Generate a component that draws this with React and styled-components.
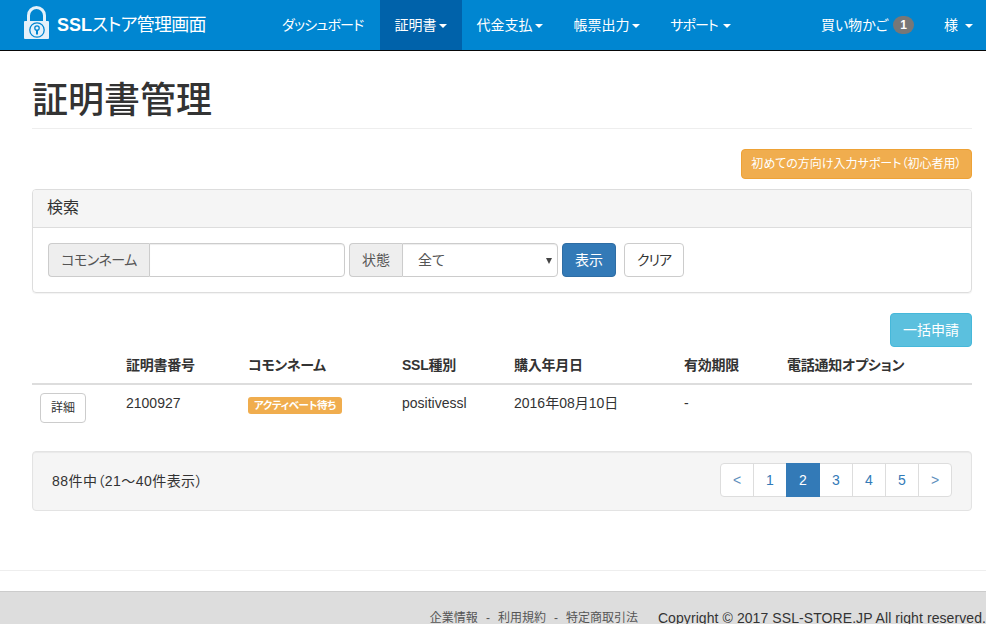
import styled, { createGlobalStyle } from 'styled-components';

const GlobalStyle = createGlobalStyle`
  html, body {
    margin: 0;
    padding: 0;
    background: #fff;
    overflow: hidden;
  }
  body {
    font-family: "Liberation Sans", "Noto Sans CJK JP", sans-serif;
    font-size: 14px;
    line-height: 20px;
    color: #333;
    font-feature-settings: "palt";
  }
  * { box-sizing: border-box; }
`

const Page = styled.div`
  width: 986px;
  height: 624px;
  overflow: hidden;
`
const Navbar = styled.nav`
  height: 51px;
  display: flex;
  align-items: stretch;
  background: #0086d1;
  border-bottom: 1px solid #080808;
  color: #fff;
`
const Brand = styled.div`
  width: 267px;
  padding: 6px 0 0 24px;
  display: flex;
  gap: 8px;
  font-size: 18px;
  line-height: 38px;
  letter-spacing: -0.7px;
  b { font-weight: 700; letter-spacing: 0; }
`
const NavItem = styled.div`
  padding: 15px ${(p) => p.$pr || 15}px 15px ${(p) => p.$pl || 15}px;
  display: flex;
  align-items: center;
  letter-spacing: ${(p) => p.$tight || 0}px;
  background: ${(p) => (p.$active ? '#0062aa' : 'transparent')};
`
const Spacer = styled.div`
  flex: 1;
`
const Caret = styled.span`
  display: inline-block;
  margin-left: ${(p) => p.$gap || 3}px;
  margin-top: 2px;
  border-top: 4px solid #fff;
  border-left: 4px solid transparent;
  border-right: 4px solid transparent;
`
const CountBadge = styled.span`
  margin-left: 5px;
  width: 21px;
  height: 18px;
  border-radius: 10px;
  background: #777;
  color: #fff;
  font-size: 12px;
  font-weight: 700;
  line-height: 18px;
  text-align: center;
`
const Main = styled.main`
  padding: 0 14px 0 32px;
`
const Title = styled.h1`
  margin: 0;
  height: 78px;
  padding-top: 28px;
  font-size: 36px;
  font-weight: 500;
  line-height: 44px;
  color: #333;
  border-bottom: 1px solid #eee;
`
const ActionRow = styled.div`
  display: flex;
  justify-content: flex-end;
  margin-top: ${(p) => p.$top}px;
`
const Button = styled.button`
  font: inherit;
  font-feature-settings: "palt";
  height: ${(p) => p.$h || 34}px;
  padding: 0 ${(p) => p.$px || 12}px;
  border-radius: 4px;
  border: 1px solid ${(p) => ({ warning: '#eea236', info: '#46b8da', primary: '#2e6da4' }[p.$kind] || '#ccc')};
  background: ${(p) => ({ warning: '#f0ad4e', info: '#5bc0de', primary: '#337ab7' }[p.$kind] || '#fff')};
  color: ${(p) => (p.$kind ? '#fff' : '#333')};
  font-size: ${(p) => p.$size || 14}px;
  white-space: nowrap;
`
const ClearButton = styled(Button)`
  margin-left: 8px;
  letter-spacing: -1px;
`
const Panel = styled.section`
  margin-top: 10px;
  height: 104px;
  border: 1px solid #ddd;
  border-radius: 4px;
  box-shadow: 0 1px 1px rgba(0, 0, 0, 0.05);
`
const PanelHeading = styled.div`
  height: 38px;
  padding: 0 14px;
  background: #f5f5f5;
  border-bottom: 1px solid #ddd;
  border-radius: 3px 3px 0 0;
  font-size: 16px;
  line-height: 36px;
`
const SearchForm = styled.form`
  display: flex;
  padding: 15px;
`
const InputGroup = styled.div`
  display: flex;
  width: ${(p) => p.$w}px;
  height: 34px;
  margin-right: 4px;
`
const Addon = styled.span`
  width: ${(p) => p.$w}px;
  flex: none;
  background: #eee;
  border: 1px solid #ccc;
  border-right: 0;
  border-radius: 4px 0 0 4px;
  color: #555;
  letter-spacing: ${(p) => p.$tight || 0}px;
  line-height: 32px;
  text-align: center;
`
const TextInput = styled.input`
  flex: 1;
  min-width: 0;
  border: 1px solid #ccc;
  border-radius: 0 4px 4px 0;
  box-shadow: inset 0 1px 1px rgba(0, 0, 0, 0.075);
`
const SelectBox = styled.div`
  flex: 1;
  position: relative;
  border: 1px solid #ccc;
  border-radius: 0 4px 4px 0;
  box-shadow: inset 0 1px 1px rgba(0, 0, 0, 0.075);
  padding-left: 15px;
  line-height: 32px;
  color: #555;
  &::after {
    content: '';
    position: absolute;
    right: 5px;
    top: 14px;
    border-top: 6px solid #444;
    border-left: 3px solid transparent;
    border-right: 3px solid transparent;
  }
`
const Table = styled.table`
  width: 940px;
  table-layout: fixed;
  border-collapse: collapse;
  th {
    height: 37px;
    padding: 8px;
    text-align: left;
    font-weight: 700;
    letter-spacing: -0.25px;
    border-bottom: 2px solid #ddd;
  }
  td {
    height: 47px;
    padding: 8px;
    vertical-align: top;
  }
`
const StatusLabel = styled.span`
  display: inline-block;
  margin-top: 4px;
  padding: 0 6px;
  height: 17px;
  background: #f0ad4e;
  border-radius: 3px;
  color: #fff;
  font-size: 10.5px;
  font-weight: 700;
  letter-spacing: -0.35px;
  line-height: 17px;
  vertical-align: top;
`
const Well = styled.div`
  margin-top: 20px;
  height: 60px;
  padding: 0 19px;
  display: flex;
  align-items: center;
  justify-content: space-between;
  background: #f5f5f5;
  border: 1px solid #e3e3e3;
  border-radius: 4px;
  box-shadow: inset 0 1px 1px rgba(0, 0, 0, 0.05);
`
const ResultCount = styled.span`
  letter-spacing: 0.45px;
`
const Pagination = styled.ul`
  display: flex;
  margin: 0 0 2px;
  padding: 0;
  list-style: none;
`
const PageLink = styled.li`
  width: 34px;
  height: 34px;
  margin-left: -1px;
  border: 1px solid ${(p) => (p.$active ? '#337ab7' : '#ddd')};
  background: ${(p) => (p.$active ? '#337ab7' : '#fff')};
  color: ${(p) => (p.$active ? '#fff' : p.$muted ? '#5d8fbd' : '#337ab7')};
  line-height: 32px;
  text-align: center;
  z-index: ${(p) => (p.$active ? 1 : 0)};
  &:first-child { border-radius: 4px 0 0 4px; }
  &:last-child { border-radius: 0 4px 4px 0; }
`
const FooterRule = styled.hr`
  margin: 59px 0 20px;
  border: 0;
  border-top: 1px solid #eee;
`
const Footer = styled.footer`
  height: 40px;
  padding-top: 16px;
  display: flex;
  justify-content: flex-end;
  gap: 20px;
  background: #ddd;
  border-top: 1px solid #ccc;
  white-space: nowrap;
`
const FooterLinks = styled.span`
  font-size: 12px;
  color: #555;
`
const FooterSep = styled.span`
  margin: 0 8px;
`
const Copyright = styled.span`
  letter-spacing: 0.08px;
`
const LogoSvg = styled.svg`
  flex: none;
`

const LockLogo = () => (
  <LogoSvg width="25" height="33" viewBox="0 0 25 33">
    <path d="M4.5 16V9.5a8 8 0 0 1 16 0V16" fill="none" stroke="#e4f1fa" strokeWidth="3" />
    <rect x="0" y="15" width="25" height="18" rx="1" fill="#e4f1fa" />
    <circle cx="13" cy="24" r="7.2" fill="none" stroke="#0086d1" strokeWidth="1.3" />
    <circle cx="13" cy="22" r="2.2" fill="none" stroke="#0086d1" strokeWidth="1.3" />
    <path d="M13 24v4.5" stroke="#0086d1" strokeWidth="2" />
  </LogoSvg>
)

const columns = [86, 122, 154, 112, 170, 103, 193]
const headers = ['', '証明書番号', 'コモンネーム', 'SSL種別', '購入年月日', '有効期限', '電話通知オプション']
const pages = ['<', '1', '2', '3', '4', '5', '>']

const App = () => {
  return (
    <Page>
      <GlobalStyle />
      <Navbar>
        <Brand>
          <LockLogo />
          <span><b>SSL</b>ストア管理画面</span>
        </Brand>
        <NavItem $tight={-0.8} $pr={17}>ダッシュボード</NavItem>
        <NavItem $active $pl={14} $pr={15}>証明書<Caret /></NavItem>
        <NavItem $pl={14} $pr={15}>代金支払<Caret /></NavItem>
        <NavItem $pl={15}>帳票出力<Caret /></NavItem>
        <NavItem $tight={-1}>サポート<Caret $gap={5} /></NavItem>
        <Spacer />
        <NavItem>買い物かご<CountBadge>1</CountBadge></NavItem>
        <NavItem $pr={13}>様<Caret $gap={7} /></NavItem>
      </Navbar>
      <Main>
        <Title>証明書管理</Title>
        <ActionRow $top={20}>
          <Button $kind="warning" $h={30} $px={9.5} $size={12}>初めての方向け入力サポート（初心者用）</Button>
        </ActionRow>
        <Panel>
          <PanelHeading>検索</PanelHeading>
          <SearchForm>
            <InputGroup $w={297}>
              <Addon $w={101} $tight={-0.5}>コモンネーム</Addon>
              <TextInput />
            </InputGroup>
            <InputGroup $w={209}>
              <Addon $w={53}>状態</Addon>
              <SelectBox>全て</SelectBox>
            </InputGroup>
            <Button $kind="primary">表示</Button>
            <ClearButton>クリア</ClearButton>
          </SearchForm>
        </Panel>
        <ActionRow $top={20}>
          <Button $kind="info">一括申請</Button>
        </ActionRow>
        <Table>
          <colgroup>
            {columns.map((w, i) => <col key={i} width={w} />)}
          </colgroup>
          <thead>
            <tr>
              {headers.map((h) => <th key={h}>{h}</th>)}
            </tr>
          </thead>
          <tbody>
            <tr>
              <td><Button $h={30} $px={10} $size={12}>詳細</Button></td>
              <td>2100927</td>
              <td><StatusLabel>アクティベート待ち</StatusLabel></td>
              <td>positivessl</td>
              <td>2016年08月10日</td>
              <td>-</td>
              <td></td>
            </tr>
          </tbody>
        </Table>
        <Well>
          <ResultCount>88件中（21～40件表示）</ResultCount>
          <Pagination>
            {pages.map((p) => (
              <PageLink key={p} $active={p === '2'} $muted={p === '<' || p === '>'}>{p}</PageLink>
            ))}
          </Pagination>
        </Well>
      </Main>
      <FooterRule />
      <Footer>
        <FooterLinks>企業情報<FooterSep>-</FooterSep>利用規約<FooterSep>-</FooterSep>特定商取引法</FooterLinks>
        <Copyright>Copyright © 2017 SSL-STORE.JP All right reserved.</Copyright>
      </Footer>
    </Page>
  )
}

export default App
